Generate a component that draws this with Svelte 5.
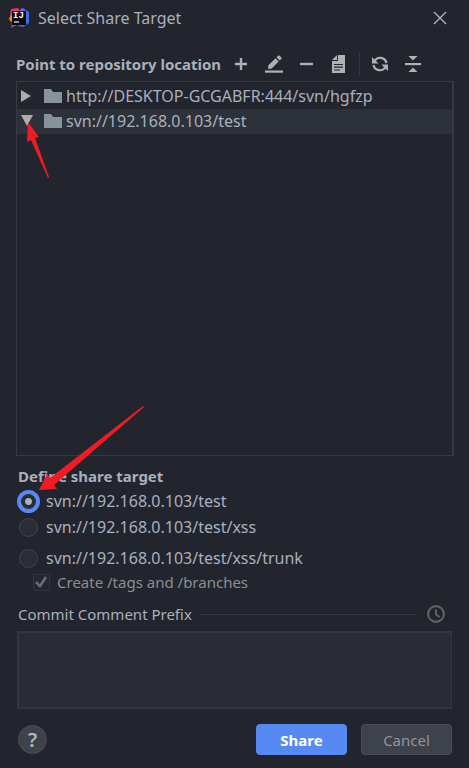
<script lang="ts">
  type Repository = { url: string; expanded: boolean };

  const repositories = $state<Repository[]>([
    { url: "http://DESKTOP-GCGABFR:444/svn/hgfzp", expanded: false },
    { url: "svn://192.168.0.103/test", expanded: true },
  ]);

  const targets = [
    "svn://192.168.0.103/test",
    "svn://192.168.0.103/test/xss",
    "svn://192.168.0.103/test/xss/trunk",
  ];

  let selected = $state(1);
  let target = $state(targets[0]);
  let createFolders = $state(true);
  let comment = $state("");

  function toggle(index: number): void {
    selected = index;
    repositories[index].expanded = !repositories[index].expanded;
  }
</script>

<div class="dialog">
  <header class="title-bar">
    <svg class="logo" width="22" height="22" viewBox="0 0 22 22">
      <path d="M3 2 L10 1 L13 6 L6 14 L2 9 Z" fill="#f5325c" />
      <path d="M3 8 L8 9 L7 14 L3 15 L1 12 Z" fill="#fb8b24" />
      <path d="M4 12 L11 9 L14 20 L9 18 L3 21 Z" fill="#b02fc4" />
      <path d="M12 4 L15 1 L21 5 L21 16 L15 20 L9 18 Z" fill="#3b6cec" />
      <path d="M11 4 L14 1 L16 3 L15 6 Z" fill="#8e5fe0" />
      <rect x="4" y="4" width="14" height="14" fill="#0b0b0d" />
      <text x="5" y="11" class="logo-text">IJ</text>
      <rect x="6" y="14" width="5" height="2" fill="#999" />
    </svg>
    <h1>Select Share Target</h1>
    <button class="close" type="button" aria-label="Close">
      <svg width="14" height="14" viewBox="0 0 14 14">
        <path d="M1 1 L13 13 M13 1 L1 13" stroke="#b4b6ba" stroke-width="1.3" />
      </svg>
    </button>
  </header>

  <div class="toolbar">
    <h2>Point to repository location</h2>
    <div class="tools">
      <button type="button" aria-label="Add">
        <svg width="20" height="20" viewBox="0 0 20 20">
          <path d="M10 4 V16 M4 10 H16" stroke="#afb1b3" stroke-width="2.4" />
        </svg>
      </button>
      <button type="button" aria-label="Edit">
        <svg width="20" height="20" viewBox="0 0 20 20" fill="#afb1b3">
          <path d="M4 15 L4.5 11.3 L11.5 4.3 L14.7 7.5 L7.7 14.5 Z" />
          <path d="M12.5 3.3 L14 1.8 Q15 1.1 16 2 L17.2 3.2 Q18 4.2 17.2 5 L15.7 6.5 Z" />
          <rect x="1" y="16.5" width="18" height="2.2" />
        </svg>
      </button>
      <button type="button" aria-label="Remove">
        <svg width="20" height="20" viewBox="0 0 20 20">
          <path d="M3 10 H16" stroke="#afb1b3" stroke-width="2.4" />
        </svg>
      </button>
      <button type="button" aria-label="Show details">
        <svg width="20" height="20" viewBox="0 0 20 20">
          <path d="M8 1 H15 V19 H2 V7 H8 Z M7 1 V6 H2 Z" fill="#afb1b3" />
          <path d="M4 10.5 H13 M4 13.2 H13 M4 16 H10" stroke="#22252d" stroke-width="1.2" />
        </svg>
      </button>
      <span class="divider"></span>
      <button type="button" aria-label="Refresh">
        <svg width="20" height="20" viewBox="0 0 20 20">
          <path
            d="M4.5 7 A6.5 6.5 0 0 1 16.5 9 M15.5 13 A6.5 6.5 0 0 1 3.5 11"
            fill="none"
            stroke="#afb1b3"
            stroke-width="2.2"
          />
          <path d="M2 3 V9.5 H8.5 Z M18 17 V10.5 H11.5 Z" fill="#afb1b3" />
        </svg>
      </button>
      <button type="button" aria-label="Collapse all">
        <svg width="20" height="20" viewBox="0 0 20 20" fill="#afb1b3">
          <path d="M5.5 2 H14.5 L10 6.5 Z M5.5 18 H14.5 L10 13.5 Z" />
          <rect x="2" y="9" width="16" height="2.2" />
        </svg>
      </button>
    </div>
  </div>

  <div class="tree">
    {#each repositories as repository, index}
      <button
        class="node"
        class:selected={selected === index}
        type="button"
        onclick={() => toggle(index)}
      >
        <svg width="14" height="12" viewBox="0 0 14 12" fill="#adadad">
          {#if repository.expanded}
            <path d="M1 0 H13 L7 11 Z" />
          {:else}
            <path d="M1 0 L11 6 L1 12 Z" />
          {/if}
        </svg>
        <svg class="folder" width="18" height="14" viewBox="0 0 18 14">
          <path d="M0 0 H7 L9 3 H18 V14 H0 Z" fill="#87939a" />
        </svg>
        <span>{repository.url}</span>
      </button>
    {/each}
    <svg class="tree-arrow" width="26" height="58" viewBox="0 0 26 58">
      <path d="M3 0 L14 15 L10 16 L24 55 L23 56 L6 18 L2 20 Z" fill="#f01c24" />
    </svg>
  </div>

  <section class="share-target" aria-labelledby="share-heading">
    <h2 id="share-heading">Define share target</h2>
    {#each targets as url, index}
      <label class="option" class:spaced={index === 2}>
        <input type="radio" name="target" value={url} bind:group={target} />
        <span>{url}</span>
      </label>
    {/each}
    <label class="option nested">
      <input type="checkbox" bind:checked={createFolders} disabled />
      <svg class="tick" width="16" height="16" viewBox="0 0 16 16">
        <path d="M3 8 L7 12 L13 3" fill="none" stroke="#6b717d" stroke-width="2.4" />
      </svg>
      <span>Create /tags and /branches</span>
    </label>
    <svg class="target-arrow" width="107" height="86" viewBox="0 0 107 86">
      <path d="M106 1 L16 79 L19 83 L1 84 L9 68 L12 72 L105 0 Z" fill="#f01c24" />
    </svg>
  </section>

  <div class="comment-header">
    <label for="comment">Commit Comment Prefix</label>
    <span class="rule"></span>
    <button type="button" aria-label="Comment history">
      <svg width="20" height="20" viewBox="0 0 20 20" fill="none" stroke="#626262">
        <circle cx="10" cy="10" r="7.9" stroke-width="2.1" />
        <path d="M10 5.5 V10.5 L13.5 13" stroke-width="2" />
      </svg>
    </button>
  </div>
  <textarea id="comment" bind:value={comment}></textarea>

  <footer>
    <button class="help" type="button" aria-label="Help">?</button>
    <button class="btn btn-primary" type="button">Share</button>
    <button class="btn btn-secondary" type="button">Cancel</button>
  </footer>
</div>

<style>
  :global(body) {
    margin: 0;
    background: #22252d;
  }

  .dialog {
    display: flex;
    flex-direction: column;
    box-sizing: border-box;
    min-height: 100vh;
    padding: 0 15px 13px 16px;
    background: #22252d;
    color: #a9b0bd;
    font-family: "Noto Sans", "Open Sans", sans-serif;
    font-size: 15px;
    line-height: 20px;
  }

  button,
  textarea {
    font: inherit;
    color: inherit;
  }

  button {
    padding: 0;
    border: none;
    background: none;
    cursor: pointer;
  }

  svg {
    display: block;
    flex: none;
  }

  h1,
  h2 {
    margin: 0;
    white-space: nowrap;
  }

  h1 {
    flex: 1;
    font-size: 16px;
    font-weight: 400;
  }

  h2 {
    font-size: 15px;
    font-weight: 700;
  }

  .title-bar {
    display: flex;
    align-items: center;
    gap: 8px;
    height: 36px;
    margin-left: -8px;
  }

  .logo-text {
    fill: #fff;
    font-family: "Liberation Mono", monospace;
    font-size: 9px;
    font-weight: 700;
  }

  .close {
    padding: 3px 7px;
  }

  .toolbar {
    display: flex;
    align-items: center;
    height: 32px;
    margin-top: 12px;
  }

  .tools {
    display: flex;
    align-items: center;
    margin-left: 3px;
  }

  .tools button {
    display: grid;
    place-items: center;
    width: 33px;
    height: 32px;
  }

  .divider {
    width: 1px;
    height: 24px;
    margin: 0 3px;
    background: #32363e;
  }

  .tree {
    position: relative;
    flex: 1;
    min-height: 120px;
    margin-top: 1px;
    padding-top: 2px;
    border: 1px solid #363a42;
    border-right-width: 2px;
  }

  .node {
    display: flex;
    align-items: center;
    width: 100%;
    height: 25px;
    padding: 0 0 2px 3px;
    font-size: 16px;
    text-align: left;
  }

  .node.selected {
    background: #2d3139;
  }

  .folder {
    margin: 0 4px 0 10px;
  }

  .tree-arrow {
    position: absolute;
    top: 40px;
    left: 8px;
    pointer-events: none;
  }

  .share-target {
    position: relative;
    margin-top: 10px;
    padding-left: 2px;
  }

  .share-target h2 {
    margin-bottom: 2px;
  }

  .option {
    display: flex;
    align-items: center;
    gap: 8px;
    height: 26px;
    padding-left: 1px;
    font-size: 16px;
  }

  .option.spaced {
    margin-top: 5px;
  }

  .option.nested {
    height: 22px;
    padding-left: 15px;
    color: #8c8f90;
    font-size: 15px;
  }

  .target-arrow {
    position: absolute;
    top: -60px;
    left: 22px;
    pointer-events: none;
  }

  input {
    appearance: none;
    flex: none;
    box-sizing: border-box;
    margin: 0;
    border: 1px solid #3f444e;
    background: #292d35;
  }

  input[type="radio"] {
    width: 19px;
    height: 19px;
    border-radius: 50%;
  }

  input[type="radio"]:checked {
    width: 23px;
    height: 23px;
    margin: -2px;
    border: 4px solid #568af2;
    background: radial-gradient(circle, #a9b0bd 3px, #292d35 4px);
  }

  input[type="checkbox"] {
    width: 17px;
    height: 17px;
    border-color: #32363e;
    border-radius: 2px;
    background: #252830;
  }

  .tick {
    margin-left: -25px;
    visibility: hidden;
    pointer-events: none;
  }

  input:checked + .tick {
    visibility: visible;
  }

  .comment-header {
    display: flex;
    align-items: center;
    height: 24px;
    margin-top: 9px;
    padding: 0 8px 0 2px;
  }

  .rule {
    flex: 1;
    height: 1px;
    margin: 0 10px 0 7px;
    background: #363a42;
  }

  textarea {
    box-sizing: border-box;
    height: 78px;
    margin: 5px 2px 0 1px;
    padding: 4px;
    border: 2px solid #32363e;
    border-right-width: 1px;
    outline: none;
    background: #292c34;
    resize: none;
  }

  footer {
    display: flex;
    align-items: center;
    gap: 14px;
    margin-top: 15px;
    padding: 0 2px;
  }

  .help {
    width: 29px;
    height: 29px;
    margin-right: auto;
    border: 1px solid #484d57;
    border-radius: 50%;
    background: #3d424b;
    color: #b4b6ba;
    font-size: 20px;
    font-weight: 600;
    line-height: 26px;
  }

  .btn {
    width: 91px;
    height: 31px;
    border: 1px solid #484d57;
    border-radius: 4px;
  }

  .btn-primary {
    border-color: #568af2;
    background: #568af2;
    color: #fff;
    font-weight: 700;
  }

  .btn-secondary {
    background: #3d424b;
    color: #90959f;
  }
</style>
